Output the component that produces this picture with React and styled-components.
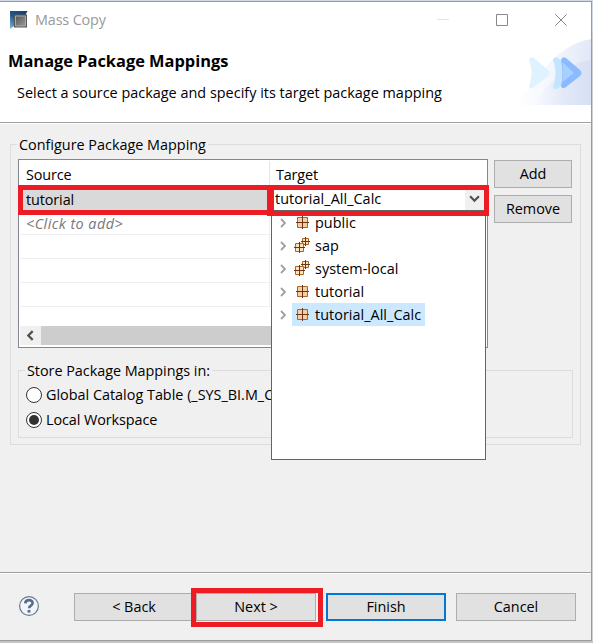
import React from "react";
import styled, { createGlobalStyle, css } from "styled-components";

const Global = createGlobalStyle`
  * { box-sizing: border-box; }
  html, body { margin: 0; padding: 0; overflow: hidden; }
  body {
    width: 593px; height: 643px; background: #c9c9c9; color: #000;
    font: 14.4px/20px "Open Sans", "Noto Sans", sans-serif;
  }
`;

const Desktop = styled.div`
  width: 593px; height: 643px; padding-top: 1px;
  background: linear-gradient(#d3d8e8 0 32px, #d2d2d2 32px 100%);
  border-bottom: 2px solid #c6c6c6;
`;
const Window = styled.main`
  position: relative;
  display: flex; flex-direction: column;
  width: 592px; height: 640px;
  background: #f0f0f0;
  border: solid #9b9b9b; border-width: 1px 1px 1px 0;
`;
const Text = styled.span`
  display: block; white-space: pre;
  letter-spacing: ${(p) => p.$track || 0}px;
`;

const Header = styled.header`
  display: flex; flex-direction: column;
  height: 121px; background: #fff; border-bottom: 1px solid #a0a0a0;
  flex: none;
`;
const TitleBar = styled.div`
  display: flex; align-items: center; height: 36px; padding-left: 10px; color: #999;
`;
const WindowTitle = styled(Text)` margin-left: 7px; flex: 1; `;
const WindowControls = styled.div` display: flex; gap: 47px; padding-right: 24px; `;
const HeaderBody = styled.div` display: flex; height: 83px; justify-content: space-between; `;
const Heading = styled.h1`
  margin: 12px 0 0 8px; font-size: 16.4px; line-height: 22px; font-weight: 700; white-space: pre;
`;
const Subheading = styled(Text)` margin: 11px 0 0 17px; `;

const Body = styled.section`
  height: 449px; border-top: 1px solid #fff; padding: 20px 10px 0; flex: none;
`;
const Group = styled.fieldset`
  position: relative; margin: 0; padding: 0; min-width: 0; border: 1px solid #dcdcdc;
`;
const MappingGroup = styled(Group)` width: 571px; height: 301px; `;
const StoreGroup = styled(Group)`
  width: 555px; height: 68px; margin: 22px 0 0 7px; padding: 11px 0 0 7px;
`;
const GroupTitle = styled(Text)`
  position: absolute; top: -10px; left: ${(p) => p.$left}px;
  padding: 0 2px; background: #f0f0f0;
`;
const MappingRow = styled.div` display: flex; gap: 6px; padding: 14px 0 0 7px; `;
const Table = styled.div`
  width: 470px; height: 189px; border: 1px solid #828790; background: #fff; padding: 1px 1px 2px;
  display: flex; flex-direction: column; flex: none;
`;
const HeadRow = styled.div` display: grid; grid-template-columns: 250px 1fr; height: 24px; line-height: 27px; `;
const HeadCell = styled(Text)`
  padding-left: 6px;
  ${(p) => p.$divider && css`border-right: 1px solid #e5e5e5;`}
`;
const Row = styled.div`
  display: grid; grid-template-columns: 250px 1fr; height: 24px; line-height: 25px; flex: none;
  border-bottom: 1px solid #f0f0f0;
  ${(p) => p.$selected && css`height: 26px; line-height: 29px; background: linear-gradient(90deg, #d9d9d9 249px, #fff 249px);`}
`;
const Cell = styled(Text)`
  padding-left: 6px; border-right: 1px solid #f0f0f0;
  ${(p) => p.$hint && css`color: #777; font-style: italic;`}
`;
const Scrollbar = styled.div`
  display: flex; height: 19px; margin-top: auto; background: #cdcdcd; flex: none;
`;
const ScrollArrow = styled.div`
  display: flex; align-items: center; justify-content: center; width: 21px; background: #f0f0f0;
`;
const ButtonColumn = styled.div` display: flex; flex-direction: column; gap: 7px; padding-top: 1px; `;
const Button = styled.button`
  height: 28px; width: ${(p) => p.$width}px; padding: 0;
  border: ${(p) => (p.$primary ? "2px solid #0078d7" : "1px solid #adadad")};
  background: #e1e1e1; color: #000; font: inherit;
  line-height: 20px; border-radius: 0; text-align: center; white-space: pre;
`;
const Option = styled.div` display: flex; align-items: center; gap: 4px; height: 25px; `;
const RadioMark = styled.span`
  display: flex; align-items: center; justify-content: center;
  width: 16px; height: 16px; border: 1px solid #333; border-radius: 50%; background: #fff;
  &::after {
    content: ""; width: 10px; height: 10px; border-radius: 50%;
    background: ${(p) => (p.$on ? "#333" : "transparent")};
  }
`;

const Dropdown = styled.div`
  position: absolute; left: 271px; top: 208px; width: 215px; height: 250px;
  background: #fff; border: 1px solid #646464;
`;
const TreeRow = styled.div`
  display: flex; align-items: center; height: 23px;
`;
const Tree = styled.div` padding: 0 0 0 6px; `;
const TreeItem = styled.div`
  display: flex; align-items: center; gap: 4px; height: 23px; padding: 0 4px 0 2px; margin-left: 4px;
  background: ${(p) => (p.$selected ? "#cce8ff" : "transparent")};
`;
const Combo = styled.div`
  position: absolute; left: 271px; top: 187px; width: 215px; height: 22px;
  display: flex; background: #fff; border-bottom: 1px solid #646464; padding-left: 4px; line-height: 20px;
  justify-content: space-between; overflow: hidden;
`;
const ComboArrow = styled.div`
  width: 21px; background: #f0f0f0; display: flex; align-items: center; justify-content: center;
  padding: 0 2px 3px 0;
`;
const Highlight = styled.div`
  position: absolute; border: 5px solid #ed1c24; pointer-events: none;
`;
const SourceHighlight = styled(Highlight)` left: 18px; top: 183px; width: 254px; height: 30px; `;
const TargetHighlight = styled(Highlight)` left: 267px; top: 183px; width: 222px; height: 31px; border-left-width: 7px; `;
const NextHighlight = styled(Highlight)` left: -5px; top: -5px; width: 132px; height: 39px; `;

const Footer = styled.footer`
  display: flex; align-items: flex-start; flex: 1;
  border-top: 1px solid #a0a0a0; box-shadow: inset 0 1px #fff; padding: 20px 0 0 18px;
`;
const Help = styled.div` width: 22px; height: 22px; margin: 2px 34px 0 0; `;
const Slot = styled.div` position: relative; margin-left: ${(p) => p.$gap}px; z-index: ${(p) => p.$top || 0}; height: 28px; `;

const AppIcon = () => (
  <svg width="18" height="18" viewBox="0 0 18 18">
    <defs>
      <linearGradient id="blueFold" x1="0" y1="1" x2="1" y2="0"><stop stopColor="#8fb6d8" /><stop offset=".45" stopColor="#1d5590" /><stop offset="1" stopColor="#173e6c" /></linearGradient>
      <linearGradient id="greyBox" x1="0" y1="0" x2="1" y2="1"><stop stopColor="#555" /><stop offset="1" stopColor="#999" /></linearGradient>
    </defs>
    <path d="M0 0h17.5l-2 4H4v11l-4 3z" fill="url(#blueFold)" />
    <path d="M4 3.500h13v13H4z" fill="#555" />
    <path d="M5.500 5h10v10h-10z" fill="url(#greyBox)" stroke="#aaa" />
  </svg>
);
const WindowGlyph = ({ kind }) => (
  <svg width="12" height="12" viewBox="0 0 12 12" fill="none" stroke="#888">
    {kind === "min" && <path d="M0 5.5h12" stroke="#e2e2e2" />}
    {kind === "max" && <path d="M.5.5h11v11H.5z" />}
    {kind === "close" && <path d="M.3.3l11.4 11.4M11.7.3.3 11.7" />}
  </svg>
);
const Banner = () => (
  <svg width="76" height="67" viewBox="0 0 76 67">
    <defs>
      <linearGradient id="wave"><stop stopColor="#fff" /><stop offset=".5" stopColor="#f4f6fd" /><stop offset="1" stopColor="#e2e8f8" /></linearGradient>
      <linearGradient id="fold"><stop stopColor="#dbe3f6" stopOpacity="0" /><stop offset="1" stopColor="#d8e0f5" /></linearGradient>
    </defs>
    <path d="M0 67C18 53 34 8 76 1v66z" fill="url(#wave)" />
    <path d="M18 67C36 43 50 25 76 22v45z" fill="url(#fold)" />
    <path d="M14 22q1-4 5-2l14 12q3 3 0 6L19 49q-4 3-5-1 5-13 0-26z" fill="#def3ff" />
    <path d="M38 22q1-4 5-2l7 6v19l-7 5q-4 3-5-1 5-14 0-27z" fill="#c5e5ff" />
    <path d="M46 22q1-4 5-2l14 12q3 3 0 6L51 49q-4 3-5-1 3-13 0-26z" fill="#8bbaff" />
    <path d="M47.500 24l11.500 11-11.500 9q1.500-10 0-20z" fill="#a5d0ff" />
  </svg>
);
const Chevron = ({ dir, color = "#505050", size = 11, weight = 2 }) => {
  const paths = { left: "M7 1L3 5l4 4", right: "M3 1l4 4-4 4", down: "M1 3l4 4 4-4" };
  return (
    <svg width={size} height={size} viewBox="0 0 10 10" fill="none" stroke={color} strokeWidth={weight}>
      <path d={paths[dir]} />
    </svg>
  );
};
const PackageIcon = ({ nested }) => (
  <svg width="17" height="17" viewBox="0 0 17 17" fill="none">
    {nested ? (
      <>
        <path d="M8.500 1.500h6v6h-6z" fill="#fbe3bd" stroke="#ab6528" />
        <path d="M11.500 0v9M7 4.500h9" stroke="#6e3318" />
        <path d="M1.500 6.500h8v8h-8z" fill="#fbe3bd" stroke="#ab6528" />
        <path d="M5.500 5v11M0 10.500h11" stroke="#6e3318" />
      </>
    ) : (
      <>
        <path d="M3.500 3.500h10v10h-10z" fill="#f4d0a0" stroke="#ab6528" />
        <path d="M8.500 2v13M2 8.500h13" stroke="#6e3318" />
      </>
    )}
  </svg>
);
const HelpIcon = () => (
  <svg width="22" height="22" viewBox="0 0 22 22" fill="none">
    <circle cx="11" cy="11" r="9.4" fill="#f4f5f7" stroke="#667998" strokeWidth="1.2" />
    <path d="M7.3 8.400c.1-4.400 7.500-4.300 7.300-.2-.1 2.500-3.500 2.400-3.500 5" stroke="#566b90" strokeWidth="2.6" />
    <path d="M11 15v2.600" stroke="#566b90" strokeWidth="2.8" />
  </svg>
);

const packages = [
  { name: "public" },
  { name: "sap", nested: true },
  { name: "system-local", nested: true },
  { name: "tutorial" },
  { name: "tutorial_All_Calc", selected: true },
];

export default function App() {
  return (
    <Desktop>
      <Global />
      <Window>
        <Header>
          <TitleBar>
            <AppIcon />
            <WindowTitle $track={-0.15}>Mass Copy</WindowTitle>
            <WindowControls>
              <WindowGlyph kind="min" /><WindowGlyph kind="max" /><WindowGlyph kind="close" />
            </WindowControls>
          </TitleBar>
          <HeaderBody>
            <div>
              <Heading>Manage Package Mappings</Heading>
              <Subheading $track={0.02}>Select a source package and specify its target package mapping</Subheading>
            </div>
            <Banner />
          </HeaderBody>
        </Header>
        <Body>
          <MappingGroup>
            <GroupTitle $left={6}>Configure Package Mapping</GroupTitle>
            <MappingRow>
              <Table>
                <HeadRow><HeadCell $divider $track={-0.15}>Source</HeadCell><HeadCell $track={-0.15}>Target</HeadCell></HeadRow>
                <Row $selected><Cell $track={-0.1}>tutorial</Cell></Row>
                <Row><Cell $hint $track={0.45}>&lt;Click to add&gt;</Cell></Row>
                <Row><Cell /></Row>
                <Row><Cell /></Row>
                <Row><Cell /></Row>
                <Scrollbar><ScrollArrow><Chevron dir="left" /></ScrollArrow></Scrollbar>
              </Table>
              <ButtonColumn>
                <Button $width={78}>Add</Button>
                <Button $width={78}>Remove</Button>
              </ButtonColumn>
            </MappingRow>
            <StoreGroup>
              <GroupTitle $left={6} $track={-0.03}>Store Package Mappings in:</GroupTitle>
              <Option><RadioMark /><Text>Global Catalog Table (_SYS_BI.M_CONTENT)</Text></Option>
              <Option><RadioMark $on /><Text $track={-0.08}>Local Workspace</Text></Option>
            </StoreGroup>
          </MappingGroup>
        </Body>
        <Footer>
          <Help><HelpIcon /></Help>
          <Slot $gap={0}><Button $width={120}>{"< Back"}</Button></Slot>
          <Slot $gap={2} $top={1}><Button $width={120}>{"Next >"}</Button><NextHighlight /></Slot>
          <Slot $gap={10}><Button $width={120} $primary>Finish</Button></Slot>
          <Slot $gap={10}><Button $width={120}>Cancel</Button></Slot>
        </Footer>
        <Dropdown>
          <Tree>
            {packages.map((p) => (
              <TreeRow key={p.name}>
                <Chevron dir="right" color="#a0a0a0" size={10} weight={1.8} />
                <TreeItem $selected={p.selected}>
                  <PackageIcon nested={p.nested} />
                  <Text $track={0.04}>{p.name}</Text>
                </TreeItem>
              </TreeRow>
            ))}
          </Tree>
        </Dropdown>
        <Combo><Text $track={0.05}>tutorial_All_Calc</Text><ComboArrow><Chevron dir="down" /></ComboArrow></Combo>
        <SourceHighlight />
        <TargetHighlight />
      </Window>
    </Desktop>
  );
}
